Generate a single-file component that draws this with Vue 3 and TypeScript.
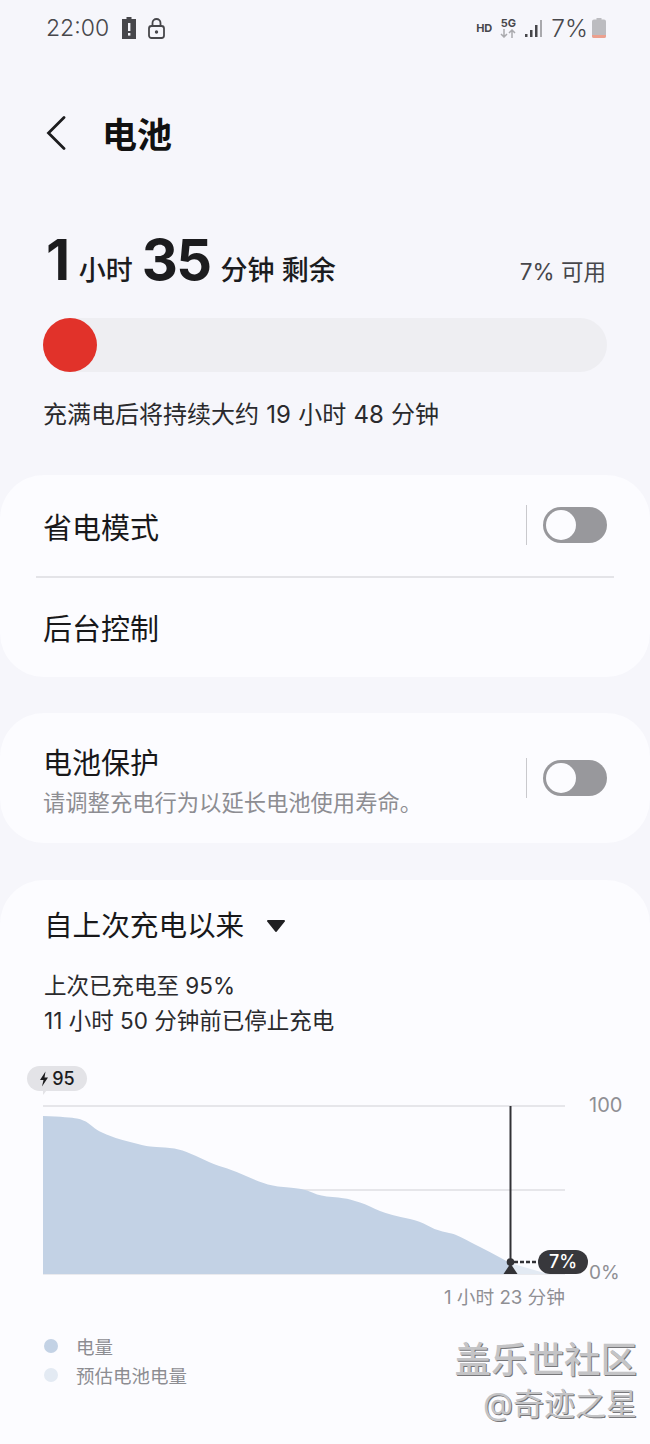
<script setup lang="ts">
import { computed } from "vue";

type Pt = [number, number];

const used: Pt[] = [
  [43, 1116], [70, 1117], [84, 1120], [92, 1126], [98, 1131], [115, 1138], [130, 1142], [146, 1146],
  [155, 1147], [175, 1148], [190, 1153], [215, 1165], [230, 1169], [255, 1180], [272, 1186],
  [295, 1188], [307, 1190], [320, 1196], [345, 1198], [355, 1201], [365, 1204], [375, 1209],
  [385, 1213], [400, 1217], [420, 1221], [435, 1230], [450, 1233], [457, 1235], [470, 1242],
  [490, 1252], [510, 1263],
];

// the chart box starts at y=1060 on the page, the curve is rounded through midpoints
const usedPath = computed(() => {
  const pts = used.map(([x, y]): Pt => [x, y - 1060]);
  let d = `M43 214V${pts[0][1]}`;
  for (let i = 1; i < pts.length - 1; i++) {
    const mx = (pts[i][0] + pts[i + 1][0]) / 2;
    const my = (pts[i][1] + pts[i + 1][1]) / 2;
    d += `Q${pts[i][0]} ${pts[i][1]} ${mx} ${my}`;
  }
  const last = pts[pts.length - 1];
  return `${d}L${last[0]} ${last[1]}V214Z`;
});
</script>

<template>
  <div class="page">
    <div class="status">
      <div class="status-left">
        <span class="clock">22:00</span>
        <svg class="ic-batt" width="14" height="22" viewBox="0 0 14 22">
          <path d="M4.500 0h5v2H14v20H0V2h4.500z" fill="#47474b" />
          <rect x="6" y="6" width="2.400" height="8" fill="#f5f5fa" />
          <rect x="6" y="16" width="2.400" height="2.600" fill="#f5f5fa" />
        </svg>
        <svg class="ic-lock" width="17" height="21" viewBox="0 0 17 21">
          <rect x="1" y="8" width="15" height="12" rx="2.500" fill="none" stroke="#47474b" stroke-width="1.800" />
          <path d="M4.500 8V5a4 4 0 0 1 8 0v3" fill="none" stroke="#47474b" stroke-width="1.800" />
          <circle cx="8.500" cy="14" r="1.700" fill="#47474b" />
        </svg>
      </div>
      <div class="status-right">
        <span class="hd">HD</span>
        <span class="net">
          <span class="net-5g">5G</span>
          <svg width="16" height="9" viewBox="0 0 16 9">
            <path d="M4 0v8M1 5l3 3 3-3M12 9V1M9 4l3-3 3 3" fill="none" stroke="#aaaaae" stroke-width="1.500" />
          </svg>
        </span>
        <svg class="ic-signal" width="18" height="19" viewBox="0 0 18 19">
          <rect x="0" y="15" width="2.500" height="3" fill="#47474b" />
          <rect x="5" y="11" width="2.500" height="7" fill="#47474b" />
          <rect x="10" y="6" width="2.500" height="12" fill="#47474b" />
          <rect x="15" y="1" width="2" height="17" fill="#a9a9ad" />
        </svg>
        <span class="pct">7%</span>
        <svg class="ic-level" width="14" height="20" viewBox="0 0 14 20">
          <path d="M4.500 0h5v1.500H12a2 2 0 0 1 2 2V18a2 2 0 0 1-2 2H2a2 2 0 0 1-2-2V3.500a2 2 0 0 1 2-2h2.500z" fill="#bcbcc0" />
          <path d="M0 17h14v1a2 2 0 0 1-2 2H2a2 2 0 0 1-2-2z" fill="#eda08e" />
        </svg>
      </div>
    </div>

    <div class="header">
      <svg class="ic-back" width="20" height="34" viewBox="0 0 20 34">
        <path d="M18 1.500 2.500 17 18 32.500" fill="none" stroke="#1c1c1e" stroke-width="2.800" stroke-linecap="round" />
      </svg>
      <h1>电池</h1>
    </div>

    <div class="summary">
      <div class="remain">
        <div class="remain-main">
          <b>1</b><span class="unit">小时</span><b>35</b><span class="unit">分钟 剩余</span>
        </div>
        <span class="avail">7% 可用</span>
      </div>
      <div class="bar"><div class="bar-dot"></div></div>
      <p class="full">充满电后将持续大约 19 小时 48 分钟</p>
    </div>

    <section class="card card-modes">
      <div class="row row-first">
        <span class="row-title">省电模式</span>
        <div class="switch-wrap"><span class="switch"><i></i></span></div>
      </div>
      <div class="divider"></div>
      <div class="row row-second">
        <span class="row-title">后台控制</span>
      </div>
    </section>

    <section class="card card-protect">
      <div class="protect-text">
        <span class="row-title">电池保护</span>
        <span class="row-sub">请调整充电行为以延长电池使用寿命。</span>
      </div>
      <div class="switch-wrap"><span class="switch"><i></i></span></div>
    </section>

    <section class="card card-usage">
      <div class="usage-title">
        <span>自上次充电以来</span>
        <svg width="18" height="12" viewBox="0 0 18 12"><path d="M1 0h16a1 1 0 0 1 .8 1.600L9.800 11.500a1 1 0 0 1-1.600 0L.2 1.600A1 1 0 0 1 1 0z" fill="#1f1f22" /></svg>
      </div>
      <p class="usage-note">上次已充电至 95%<br />11 小时 50 分钟前已停止充电</p>

      <div class="chart">
        <svg class="chart-svg" width="650" height="250" viewBox="0 0 650 250">
          <line x1="43" x2="565" y1="46" y2="46" stroke="#e6e6ea" stroke-width="2" />
          <line x1="43" x2="565" y1="130" y2="130" stroke="#e6e6ea" stroke-width="2" />
          <line x1="43" x2="565" y1="214.500" y2="214.500" stroke="#eaeaee" stroke-width="1" />
          <polygon points="510,203 548,214 510,214" fill="#e3eaf3" />
          <path :d="usedPath" fill="#c3d2e5" />
          <line x1="510.500" x2="510.500" y1="46" y2="203" stroke="#323236" stroke-width="2" />
          <line x1="514" x2="538" y1="202" y2="202" stroke="#323236" stroke-width="2.500" stroke-dasharray="4 2" />
          <circle cx="510.500" cy="202" r="3.800" fill="#323236" />
          <path d="M510.500 203.500 517.500 214h-14z" fill="#323236" />
        </svg>
        <span class="tag95">
          <svg width="10" height="16" viewBox="0 0 10 15"><path d="M6.500 0 1 8.500h3.500L3 15l6-9H5.500z" fill="#1c1c1e" /></svg>95
        </span>
        <span class="tag7">7%</span>
        <span class="axis axis-100">100</span>
        <span class="axis axis-0">0%</span>
        <span class="axis axis-time">1 小时 23 分钟</span>
      </div>

      <ul class="legend">
        <li><i class="dot-used"></i>电量</li>
        <li><i class="dot-est"></i>预估电池电量</li>
      </ul>
    </section>

    <div class="mark">
      <span class="mark-big">盖乐世社区</span>
      <span class="mark-small">@奇迹之星</span>
    </div>
  </div>
</template>

<style>
html, body {
  margin: 0;
  background: #f6f6fb;
}
</style>

<style scoped>
.page {
  position: relative;
  width: 650px;
  height: 1444px;
  overflow: hidden;
  background: #f6f6fb;
  color: #1c1c1e;
  font-family: Inter, "Noto Sans CJK SC", sans-serif;
}
.status {
  height: 56px;
  padding: 0 44px 0 46px;
  display: flex;
  justify-content: space-between;
  align-items: center;
  box-sizing: border-box;
}
.status-left, .status-right {
  display: flex;
  align-items: center;
}
.clock {
  font-size: 23px;
  font-weight: 300;
  color: #47474b;
}
.ic-batt { margin-left: 13px; }
.ic-lock { margin-left: 12px; }
.hd {
  font-size: 11px;
  font-weight: 700;
  color: #47474b;
}
.net {
  display: flex;
  flex-direction: column;
  align-items: center;
  margin-left: 8px;
  line-height: 11px;
}
.net-5g {
  font-size: 11px;
  font-weight: 700;
  color: #47474b;
}
.ic-signal { margin-left: 9px; }
.pct {
  font-size: 24.500px;
  font-weight: 300;
  color: #47474b;
  margin-left: 8px;
}
.ic-level { margin-left: 4px; }
.header {
  height: 100px;
  margin-top: 26px;
  padding-left: 46px;
  display: flex;
  align-items: center;
  gap: 36px;
  box-sizing: border-box;
}
.ic-back { margin-top: 2px; }
.header h1 {
  margin: 0;
  font-size: 35px;
  font-weight: 700;
  color: #111;
}
.summary {
  padding: 0 43px;
  height: 293px;
  box-sizing: border-box;
}
.remain {
  height: 110px;
  display: flex;
  justify-content: space-between;
  align-items: flex-end;
  box-sizing: border-box;
}
.remain-main {
  display: flex;
  align-items: baseline;
  padding-left: 3px;
}
.remain-main b {
  font-size: 56px;
  font-weight: 700;
  line-height: 64px;
  letter-spacing: -1.500px;
}
.unit {
  font-size: 27px;
  font-weight: 500;
  margin: 0 9px 0 10px;
}
.avail {
  font-size: 22.500px;
  color: #47474b;
  font-weight: 400;
  margin-right: 1px;
  padding-bottom: 6px;
}
.bar {
  margin-top: 26px;
  height: 54px;
  width: 564px;
  border-radius: 27px;
  background: #eeeef2;
}
.bar-dot {
  width: 54px;
  height: 54px;
  border-radius: 50%;
  background: #e1322a;
}
.full {
  margin: 26px 0 0;
  font-size: 24px;
  line-height: 34px;
  word-spacing: .5px;
  color: #2a2a2d;
}
.card {
  background: #fcfcff;
  border-radius: 44px;
  box-sizing: border-box;
}
.card-modes {
  height: 202px;
}
.row {
  display: flex;
  align-items: center;
  justify-content: space-between;
  padding: 0 43px;
}
.row-first { height: 101px; }
.row-first .switch-wrap { margin-bottom: 2px; }
.row-second { height: 97px; }
.row-title {
  font-size: 29px;
  font-weight: 400;
  color: #18181a;
}
.divider {
  height: 2px;
  margin: 0 36px;
  background: #e4e4e8;
}
.switch-wrap {
  display: flex;
  align-items: center;
  height: 40px;
  padding-left: 16px;
  border-left: 1px solid #c9c9cd;
}
.switch {
  display: block;
  width: 64px;
  height: 36px;
  border-radius: 18px;
  background: #98989c;
  position: relative;
}
.switch i {
  position: absolute;
  left: 3px;
  top: 3px;
  width: 30px;
  height: 30px;
  border-radius: 50%;
  background: #fcfcff;
}
.card-protect {
  margin-top: 36px;
  height: 130px;
  padding: 0 43px;
  display: flex;
  align-items: center;
  justify-content: space-between;
}
.protect-text {
  display: flex;
  flex-direction: column;
  align-self: flex-start;
  padding-top: 31px;
}
.protect-text .row-title { line-height: 40px; }
.row-sub {
  font-size: 22.300px;
  line-height: 38px;
  color: #8d8d92;
}
.card-usage {
  margin-top: 37px;
  height: 564px;
  border-radius: 44px 44px 0 0;
}
.usage-title {
  display: flex;
  align-items: center;
  gap: 23px;
  padding: 26px 0 0 44px;
  font-size: 28.600px;
  line-height: 40px;
  color: #18181a;
}
.usage-note {
  margin: 22px 0 0 44px;
  font-size: 22.500px;
  line-height: 35px;
  color: #2a2a2d;
}
.chart {
  position: relative;
  margin-top: 22px;
  height: 250px;
}
.chart-svg {
  display: block;
}
.tag95 {
  position: absolute;
  left: 27px;
  top: 6px;
  width: 60px;
  height: 25px;
  border-radius: 13px;
  background: #e3e3e7;
  display: flex;
  align-items: center;
  justify-content: center;
  gap: 3px;
  font-size: 18px;
  font-weight: 500;
}
.tag95::after {
  content: "";
  position: absolute;
  left: 16px;
  top: 24px;
  border-left: 4px solid #e3e3e7;
  border-bottom: 5px solid transparent;
}
.tag7 {
  position: absolute;
  left: 538px;
  top: 190px;
  width: 50px;
  height: 24px;
  border-radius: 12px;
  background: #38383c;
  color: #fff;
  font-size: 18px;
  font-weight: 500;
  line-height: 24px;
  text-align: center;
}
.axis {
  position: absolute;
  color: #8f8f94;
  font-size: 20px;
  line-height: 24px;
}
.axis-100 { left: 589px; top: 33px; }
.axis-0 { left: 589px; top: 201px; font-size: 19px; }
.axis-time {
  right: 85px;
  top: 226px;
  font-size: 18.700px;
}
.legend {
  list-style: none;
  margin: 21px 0 0;
  padding: 0 0 0 44px;
}
.legend li {
  display: flex;
  align-items: center;
  gap: 18px;
  height: 29px;
  font-size: 18.500px;
  color: #8d8d92;
}
.legend i {
  width: 14px;
  height: 14px;
  border-radius: 50%;
}
.dot-used { background: #c3d2e5; }
.dot-est { background: #e3eaf3; }
.mark {
  position: absolute;
  right: 13px;
  top: 1338px;
  display: flex;
  flex-direction: column;
  align-items: flex-end;
  color: #c4c4c6;
  text-shadow: 1px 1px 0 #77777a;
}
.mark-big {
  font-size: 36.500px;
  line-height: 44px;
  font-weight: 500;
}
.mark-small {
  font-size: 31px;
  line-height: 44px;
  font-weight: 400;
}
</style>
